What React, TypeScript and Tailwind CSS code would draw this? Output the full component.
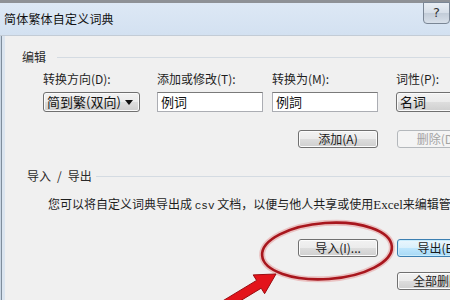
import React from "react";

const font = "font-['Noto_Sans_CJK_SC',sans-serif]";

function Btn({ children, className = "", disabled = false, primary = false }: { children: React.ReactNode; className?: string; disabled?: boolean; primary?: boolean }) {
  const base = "h-[18px] flex items-center justify-center rounded-[3px] text-[12px] leading-[14px] whitespace-nowrap shrink-0 ";
  const style = disabled
    ? "border border-[#b4b8bc] bg-[#f4f4f4] text-[#a3a3a3]"
    : primary
    ? "border border-[#3c7fb1] bg-[linear-gradient(#eaf6fd_0%,#d9f0fc_50%,#bee6fd_51%,#a7d9f5_100%)] text-[#1a1a1a] shadow-[inset_0_0_0_1px_#c9ecfc]"
    : "border border-[#707070] bg-[linear-gradient(#f2f2f2_0%,#ebebeb_50%,#dddddd_51%,#cfcfcf_100%)] text-[#1a1a1a] shadow-[inset_0_0_0_1px_#fcfcfc]";
  return <div className={base + style + " " + className}>{children}</div>;
}

function Arrow() {
  return (
    <svg width="8" height="5" viewBox="0 0 8 5" className="shrink-0">
      <path d="M0 0H8L4 5Z" fill="#111" />
    </svg>
  );
}

function Combo({ text, width }: { text: string; width: number }) {
  return (
    <div
      className="h-[20px] flex items-center justify-between pl-[3px] pr-[6px] rounded-[3px] border border-[#707070] bg-[linear-gradient(#f2f2f2_0%,#ebebeb_50%,#dddddd_51%,#cfcfcf_100%)] shadow-[inset_0_0_0_1px_#fafafa] text-[13px] leading-[14px] text-[#111] shrink-0"
      style={{ width }}
    >
      <span className="whitespace-nowrap">{text}</span>
      <Arrow />
    </div>
  );
}

function Input({ text }: { text: string }) {
  return (
    <div className="w-[106px] h-[20px] flex items-center pl-[3px] border border-[#abadb3] border-t-[#7a7a7a] bg-white text-[13px] leading-[14px] text-[#111] shrink-0">
      {text}
    </div>
  );
}

function Field({ label, children, width }: { label: string; children: React.ReactNode; width: number }) {
  return (
    <div className="flex flex-col shrink-0" style={{ width }}>
      <div className="h-[14px] text-[12px] leading-[14px] text-[#1e1e1e] whitespace-nowrap">{label}</div>
      <div className="mt-[6px]">{children}</div>
    </div>
  );
}

export default function App() {
  return (
    <div className={`relative w-[450px] h-[300px] overflow-hidden bg-[#f0f0f0] flex flex-col ${font}`}>
      <div className="h-[3px] bg-[#8e9196] shrink-0" />
      <div className="relative h-[33px] shrink-0 flex items-center pl-[4px] bg-[linear-gradient(#dde8f5,#d3e1f1)] border-b border-[#c3ccd6]">
        <span className="text-[12px] leading-[14px] text-[#111] tracking-[0.2px]">简体繁体自定义词典</span>
        <div className="absolute top-[-1px] right-[-40px] flex">
          <div className="w-[27px] h-[22px] flex items-center justify-center rounded-b-[4px] border border-[#7a8695] bg-[linear-gradient(#e9eef4_0%,#d6dee8_50%,#c2ccd8_51%,#d8e0ea_100%)] text-[13px] text-[#333] font-['DejaVu_Sans',sans-serif]">?</div>
          <div className="w-[40px] h-[22px] rounded-b-[4px] border border-[#7c3a34] bg-[linear-gradient(#e0a196,#c9473b)]" />
        </div>
      </div>
      <div className="flex-1 flex min-w-0">
        <div className="w-[1px] shrink-0 bg-[#c9d6e4]" />
        <div className="w-[1px] shrink-0 bg-[#7f8d9c]" />
        <div className="w-[3px] shrink-0 bg-[#dbe5f0]" />
        <div className="flex-1 min-w-0 flex flex-col">
          <div className="mt-[14px] h-[14px] flex items-center pl-[17px]">
            <span className="text-[12px] leading-[14px] text-[#2a2a2a]">编辑</span>
            <div className="ml-[11px] flex-1 h-px bg-[#d4dbe2]" />
          </div>
          <div className="mt-[8px] flex pl-[38px]">
            <Field label="转换方向(D):" width={114}>
              <Combo text="简到繁(双向)" width={97} />
            </Field>
            <Field label="添加或修改(T):" width={115}>
              <Input text="例词" />
            </Field>
            <Field label="转换为(M):" width={124}>
              <Input text="例詞" />
            </Field>
            <Field label="词性(P):" width={100}>
              <Combo text="名词" width={95} />
            </Field>
          </div>
          <div className="mt-[18px] flex pl-[293px] gap-[19px]">
            <Btn className="w-[80px]">添加(A)</Btn>
            <Btn className="w-[80px]" disabled>删除(D)</Btn>
          </div>
          <div className="mt-[21px] h-[14px] flex items-center pl-[22px]">
            <span className="text-[12px] leading-[14px] text-[#2a2a2a] whitespace-nowrap">
              导入<span className="mx-[6px]">/</span>导出
            </span>
            <div className="ml-[4px] flex-1 h-px bg-[#d4dbe2]" />
          </div>
          <div className="mt-[14px] h-[14px] pl-[43px] text-[12px] leading-[14px] text-[#1e1e1e] whitespace-nowrap">
            您可以将自定义词典导出成 <span className="font-['Liberation_Mono',monospace] text-[11px]">csv</span> 文档，以便与他人共享或使用<span className="font-['Liberation_Serif',serif] text-[13px]">Excel</span>来编辑管理
          </div>
          <div className="mt-[28px] flex pl-[293px] gap-[19px]">
            <Btn className="w-[80px]">导入(I)...</Btn>
            <Btn className="w-[80px]" primary>导出(E)</Btn>
          </div>
          <div className="mt-[15px] flex pl-[392px]">
            <Btn className="w-[80px]">全部删除</Btn>
          </div>
        </div>
      </div>
      <svg className="absolute inset-0 pointer-events-none" width="450" height="300" viewBox="0 0 450 300">
        <g transform="rotate(-4 327 251)">
          <ellipse cx="327" cy="251" rx="65" ry="28" fill="none" stroke="#e6a3a3" strokeWidth="6" opacity="0.6" />
          <ellipse cx="327" cy="251" rx="65" ry="28" fill="none" stroke="#a8161d" strokeWidth="2.6" />
        </g>
        <polygon points="276,274 253.2,274.9 256.6,280.4 213.8,306.3 218.4,314.1 261.2,288.2 264.6,293.7" fill="#e3141b" stroke="#9a0c10" strokeWidth="1" />
      </svg>
    </div>
  );
}
